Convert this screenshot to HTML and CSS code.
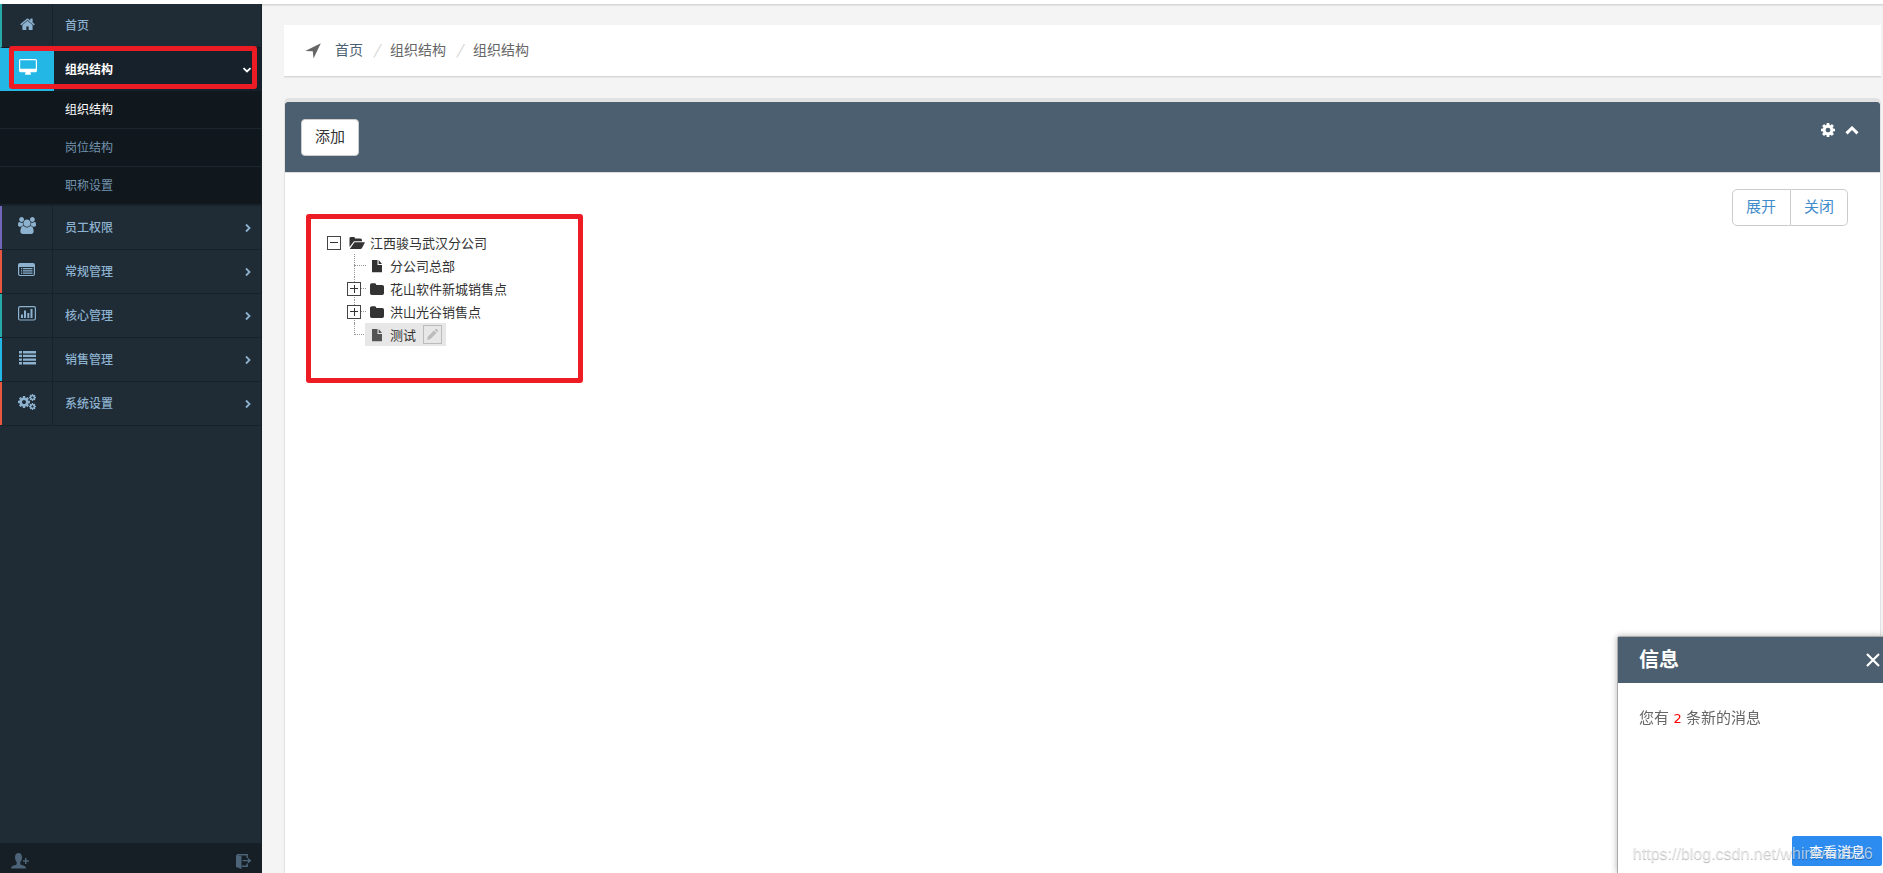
FILE: index.html
```html
<!DOCTYPE html>
<html lang="zh-CN">
<head>
<meta charset="utf-8">
<title>组织结构</title>
<link rel="stylesheet" href="styles.css">
</head>
<body>
<svg class="sprite" aria-hidden="true">
  <symbol id="cog" viewBox="128 128 1536 1536"><path d="M1152 896q0-106-75-181t-181-75-181 75-75 181 75 181 181 75 181-75 75-181zm512-109v222q0 12-8 23t-20 13l-185 28q-19 54-39 91 35 50 107 138 10 12 10 25t-9 23q-27 37-99 108t-94 71q-12 0-26-9l-138-108q-44 23-91 38-16 136-29 186-7 28-36 28h-222q-14 0-24.5-8.5t-11.5-21.5l-28-184q-49-16-90-37l-141 107q-10 9-25 9-14 0-25-11-126-114-165-168-7-10-7-23 0-12 8-23 15-21 51-66.5t54-70.5q-27-50-41-99l-183-27q-13-2-21-12.5t-8-23.5v-222q0-12 8-23t19-13l186-28q14-46 39-92-40-57-107-138-10-12-10-24 0-10 9-23 26-36 98.5-107.5t94.5-71.5q13 0 26 10l138 107q44-23 91-38 16-136 29-186 7-28 36-28h222q14 0 24.5 8.5t11.5 21.5l28 184q49 16 90 37l142-107q9-9 24-9 13 0 25 10 129 119 165 170 7 8 7 22 0 12-8 23-15 21-51 66.5t-54 70.5q26 50 41 98l183 28q13 2 21 12.5t8 23.5z"/></symbol>
  <symbol id="right" viewBox="0 0 8 10"><path d="M2 1.5 5.5 5 2 8.5" fill="none" stroke="currentColor" stroke-width="1.8"/></symbol>
  <symbol id="file" viewBox="0 0 12 14"><path d="M1 1h5.5v5H11v7.2H1z"/><path d="M7.6 1 11 4.9H7.6z"/></symbol>
  <symbol id="folder" viewBox="0 0 16 14"><path d="M1 3q0-1.800 1.800-1.800h3Q7.300 1.200 7.300 3h5.900Q15 3 15 4.800v6.400Q15 13 13.200 13H2.800Q1 13 1 11.200z"/></symbol>
</svg>
<div class="topbar"></div>
<div class="shell">
  <nav class="sidebar">
    <ul class="menu">
      <li class="item teal"><a href="#"><span class="ico"><svg width="15" height="14" viewBox="50 190 1692 1350"><path d="M1472 992v480q0 26-19 45t-45 19h-384v-384h-256v384h-384q-26 0-45-19t-19-45v-480q0-1 .5-3t.5-3l575-474 575 474q1 2 1 6zm223-69l-62 74q-8 9-21 11h-3q-13 0-21-7l-692-577-692 577q-12 8-24 7-13-2-21-11l-62-74q-8-10-7-23.500t11-21.500l719-599q32-26 76-26t76 26l244 204v-195q0-14 9-23t23-9h192q14 0 23 9t9 23v408l219 182q10 8 11 21.500t-7 23.500z"/></svg></span><span class="label">首页</span></a></li>
      <li class="item active"><a href="#"><span class="ico"><svg width="18" height="17" viewBox="-64 0 1920 1792"><path d="M1728 992v-832q0-13-9.500-22.500t-22.500-9.500h-1600q-13 0-22.500 9.500t-9.500 22.500v832q0 13 9.500 22.500t22.500 9.500h1600q13 0 22.500-9.500t9.500-22.500zm128-832v1088q0 66-47 113t-113 47h-544q0 37 16 77.500t32 71 16 43.500q0 26-19 45t-45 19h-512q-26 0-45-19t-19-45q0-14 16-44t32-70 16-78h-544q-66 0-113-47t-47-113v-1088q0-66 47-113t113-47h1600q66 0 113 47t47 113z"/></svg></span><span class="label">组织结构</span><svg class="arrow" width="10" height="8" viewBox="0 0 10 8"><path d="M1.500 2.200 5 5.500 8.500 2.200" fill="none" stroke="currentColor" stroke-width="1.800"/></svg></a><span class="mark"></span></li>
      <li class="sub">
        <ul>
          <li><a class="current" href="#">组织结构</a></li>
          <li><a href="#">岗位结构</a></li>
          <li><a href="#">职称设置</a></li>
        </ul>
      </li>
      <li class="item purple"><a href="#"><span class="ico"><svg width="18" height="17" viewBox="0 0 1920 1792"><path d="M593 896q-162 5-265 128h-134q-82 0-138-40.500t-56-118.500q0-353 124-353 6 0 43.500 21t97.500 42.500 119 21.500q67 0 133-23-5 37-5 66 0 139 81 256zm1071 637q0 120-73 189.500t-194 69.500h-874q-121 0-194-69.500t-73-189.500q0-53 3.500-103.500t14-109 26.500-108.500 43-97.500 62-81 85.500-53.500 111.500-20q10 0 43 21.500t73 48 107 48 135 21.500 135-21.500 107-48 73-48 43-21.500q61 0 111.500 20t85.500 53.500 62 81 43 97.500 26.500 108.500 14 109 3.500 103.500zm-1024-1277q0 106-75 181t-181 75-181-75-75-181 75-181 181-75 181 75 75 181zm704 384q0 159-112.500 271.500t-271.500 112.500-271.500-112.500-112.500-271.500 112.500-271.500 271.500-112.500 271.500 112.500 112.500 271.500zm576 225q0 78-56 118.500t-138 40.500h-134q-103-123-265-128 81-117 81-256 0-29-5-66 66 23 133 23 59 0 119-21.500t97.500-42.500 43.500-21q124 0 124 353zm-128-609q0 106-75 181t-181 75-181-75-75-181 75-181 181-75 181 75 75 181z"/></svg></span><span class="label">员工权限</span><svg class="arrow" width="8" height="10"><use href="#right"/></svg></a></li>
      <li class="item red"><a href="#"><span class="ico"><svg width="18" height="14" viewBox="0 0 18 14"><path fill-rule="evenodd" d="M2 0h13q2 0 2 2v9q0 2-2 2H2q-2 0-2-2V2q0-2 2-2zM1.200 4v7q0 1 1 1h12.600q1 0 1-1V4z"/><path d="M3 5h1.200v1.200H3zM5 5h9.500v1.200H5zM3 7.300h1.200v1.200H3zM5 7.300h9.500v1.200H5zM3 9.600h1.200v1.200H3zM5 9.600h9.500v1.200H5z"/></svg></span><span class="label">常规管理</span><svg class="arrow" width="8" height="10"><use href="#right"/></svg></a></li>
      <li class="item teal"><a href="#"><span class="ico"><svg width="18" height="15" viewBox="0 0 18 15"><rect x=".6" y=".6" width="16.800" height="13.400" rx="1.500" fill="none" stroke="currentColor" stroke-width="1.200"/><path d="M3 8.500h2V12H3zM6 4.500h2V12H6zM9.300 7h2v5h-2zM12.500 3h2v9h-2z"/></svg></span><span class="label">核心管理</span><svg class="arrow" width="8" height="10"><use href="#right"/></svg></a></li>
      <li class="item blue"><a href="#"><span class="ico"><svg width="17" height="14" viewBox="0 0 17 14"><path d="M0 0h3v2.400H0zM4 0h13v2.400H4zM0 3.700h3v2.400H0zM4 3.700h13v2.400H4zM0 7.400h3v2.400H0zM4 7.400h13v2.400H4zM0 11.100h3v2.400H0zM4 11.100h13v2.400H4z"/></svg></span><span class="label">销售管理</span><svg class="arrow" width="8" height="10"><use href="#right"/></svg></a></li>
      <li class="item red"><a href="#"><span class="ico"><svg width="18" height="16" viewBox="0 0 18 16"><use href="#cog" x="0" y="2" width="12" height="12"/><use href="#cog" x="11" y="0" width="7" height="7"/><use href="#cog" x="11" y="9" width="7" height="7"/></svg></span><span class="label">系统设置</span><svg class="arrow" width="8" height="10"><use href="#right"/></svg></a></li>
    </ul>
    <div class="foot">
      <button type="button" aria-label="添加用户"><svg width="18" height="16" viewBox="0 0 18 16"><path d="M7.500 0Q11 0 11 4.500 11 8 9.300 9.300v1.900Q10 12 12.500 12.600q2.500.700 2.500 3H0q0-2.300 2.500-3 2.500-.600 3.200-1.400V9.300Q4 8 4 4.500 4 0 7.500 0z"/><path d="M14 5h1.500v2.200H18v1.500h-2.500V11H14V8.700h-2V7.200h2z"/></svg></button>
      <button type="button" aria-label="退出"><svg width="16" height="15" viewBox="0 0 16 15"><path d="M0 1l5.500 1v13L0 13z"/><path d="M1 .8h10.200V4M6 12.300h5.200V9.500" fill="none" stroke="currentColor" stroke-width="1.400"/><path d="M6.500 6h5.300V3.800L15.500 6.700 11.800 9.600V7.300H6.500z"/></svg></button>
    </div>
  </nav>
  <main class="main">
    <div class="crumbs">
      <svg width="16" height="16" viewBox="0 0 16 16"><path d="M15.800.3 8.500 15.600 7.800 8.300.2 8z"/></svg>
      <a class="first" href="#">首页</a><i>/</i><a href="#">组织结构</a><i>/</i><span>组织结构</span>
    </div>
    <section class="panel">
      <header class="panel-head">
        <button class="btn add" type="button">添加</button>
        <div class="tools">
          <button type="button" aria-label="设置"><svg width="14" height="14"><use href="#cog"/></svg></button>
          <button type="button" aria-label="收起"><svg width="14" height="9" viewBox="0 0 14 9"><path d="M1.500 7.300 7 2l5.500 5.300" fill="none" stroke="currentColor" stroke-width="3"/></svg></button>
        </div>
      </header>
      <div class="panel-body">
        <div class="tree-box">
          <div class="node"><button class="toggle" type="button" aria-label="折叠"></button><svg width="16" height="14" viewBox="0 0 16 14"><path d="M.5 2.300Q.5 1 1.800 1h3Q6.200 1 6.200 2.500h5.300q1.500 0 1.500 1.800v.9H5L.5 11z"/><path d="M5.500 6.300H16L13 12q-.5 1-1.800 1H.8z"/></svg><span>江西骏马武汉分公司</span></div>
          <ul class="tree">
            <li class="leaf"><div class="node"><svg width="16" height="14"><use href="#file"/></svg><span>分公司总部</span></div></li>
            <li><div class="node"><button class="toggle plus" type="button" aria-label="展开"></button><svg width="16" height="14"><use href="#folder"/></svg><span>花山软件新城销售点</span></div></li>
            <li><div class="node"><button class="toggle plus" type="button" aria-label="展开"></button><svg width="16" height="14"><use href="#folder"/></svg><span>洪山光谷销售点</span></div></li>
            <li class="leaf"><div class="node selected"><svg width="16" height="14"><use href="#file"/></svg><span>测试</span><button class="edit" type="button" aria-label="编辑"><svg width="13" height="13" viewBox="0 0 13 13"><path d="M1 12l1-3.500L8 2.500 10.500 5l-6 6zM8.700 1.800 9.500 1q.7-.5 1.500.3l.8.8q.700.700 0 1.500l-.700.700z"/></svg></button></div></li>
          </ul>
        </div>
        <div class="group"><button class="btn" type="button">展开</button><button class="btn" type="button">关闭</button></div>
      </div>
    </section>
  </main>
</div>
<aside class="popup">
  <header><h2>信息</h2><button type="button" aria-label="关闭"><svg width="14" height="14" viewBox="0 0 14 14"><path d="M1 1l12 12M13 1 1 13" stroke="currentColor" stroke-width="2.200"/></svg></button></header>
  <p>您有 <b>2</b> 条新的消息</p>
  <button class="view" type="button">查看消息</button>
</aside>
<div class="watermark">https://blog.csdn.net/whirlwind526</div>
</body>
</html>
```
FILE: styles.css
```css
* { box-sizing: border-box; }
body {
  margin: 0;
  height: 100vh;
  overflow: hidden;
  display: flex;
  flex-direction: column;
  background: #fff;
  color: #555;
  font: 15px/20px "Noto Sans CJK SC", sans-serif;
}
ul { list-style: none; margin: 0; padding: 0; }
a { color: inherit; text-decoration: none; }
button { font: inherit; color: inherit; background: none; border: 0; padding: 0; display: block; }
svg { fill: currentColor; display: block; flex: none; }
.sprite { position: absolute; width: 0; height: 0; }

.topbar { height: 4px; flex: none; }
.shell { flex: 1; display: flex; min-height: 0; }

.sidebar {
  width: 262px;
  flex: none;
  display: flex;
  flex-direction: column;
  background: #1f2b35;
  border-right: 1px solid #172229;
  color: #8db2cf;
  font-size: 12px;
}
.menu { flex: 1; }
.item { position: relative; border-bottom: 1px solid #16212a; }
.item > a { display: flex; height: 43px; align-items: stretch; border-left: 2px solid transparent; }
.item.teal > a { border-color: #27a9a9; }
.item.purple > a { border-color: #7266ba; }
.item.red > a { border-color: #e9573f; }
.item.blue > a { border-color: #23b7e5; }
.ico { width: 51px; display: flex; align-items: center; justify-content: center; padding-bottom: 4px; border-right: 1px solid #17222b; }
.label { flex: 1; align-self: center; padding: 0 0 2px 12px; font-weight: 500; }
.arrow { align-self: center; margin-right: 9px; }
.item.active { margin-top: -1px; color: #fff; background: #17212b; border-bottom: 0; }
.item.active > a { height: 44px; border-top: 1px solid #111a21; border-left-color: #23b7e5; }
.active .ico { background: #23b7e5; width: 52px; border-color: #23b7e5; }
.active .label { padding-left: 11px; font-weight: 700; }
.mark {
  position: absolute;
  inset: -1px 4px 2px 9px;
  border: 5px solid #ed1c24;
  border-radius: 3px;
  pointer-events: none;
}
.sub { background: #10181e; border-bottom: 2px solid #17222a; }
.sub a { display: block; padding: 8px 0 9px 65px; color: #7393ad; }
.sub li + li { border-top: 1px solid #1b262e; }
.sub a.current { color: #fff; }
.foot {
  height: 30px;
  background: #151f25;
  color: #4d6478;
  display: flex;
  align-items: flex-end;
  justify-content: space-between;
  padding: 0 9px 4px 11px;
}

.main {
  flex: 1;
  min-width: 0;
  display: flex;
  flex-direction: column;
  background: #f4f4f4;
  border-top: 1px solid #d5d8d8;
  box-shadow: inset 0 1px 1px #e2e2e2;
  padding: 20px 2px 0 22px;
}
.crumbs {
  height: 52px;
  flex: none;
  display: flex;
  align-items: center;
  padding-left: 21px;
  background: #fff;
  border-bottom: 1px solid #d5d8d8;
  box-shadow: 0 1px 1px #e8e8e8;
  font-size: 14px;
  color: #666;
}
.crumbs svg { margin-right: 14px; }
.crumbs a, .crumbs span, .crumbs i { padding-bottom: 3px; }
.crumbs .first { color: #4c5f70; }
.crumbs i { width: 27px; text-align: center; color: #ccc; }
.panel {
  flex: 1;
  display: flex;
  flex-direction: column;
  margin-top: 21px;
  background: #fff;
  border: 1px solid #e2e2e2;
  border-width: 4px 1px 0;
  border-radius: 5px 5px 0 0;
}
.panel-head {
  height: 71px;
  flex: none;
  display: flex;
  align-items: flex-start;
  justify-content: space-between;
  padding: 17px 21px 0 16px;
  background: #4c5f70;
  border-bottom: 1px solid #ddd;
  border-radius: 3px 3px 0 0;
}
.btn { height: 37px; padding: 0 13px 3px; background: #fff; border: 1px solid #ccc; color: #428bca; }
.add { color: #333; border-radius: 4px; }
.tools { display: flex; align-items: center; gap: 10px; padding-top: 4px; color: #fff; }
.panel-body { display: flex; align-items: flex-start; justify-content: space-between; padding: 16px 32px 0 21px; }
.group { display: flex; }
.group .btn:first-child { padding-right: 14px; border-radius: 5px 0 0 5px; }
.group .btn:last-child { border-radius: 0 5px 5px 0; border-left: 0; }

.tree-box {
  width: 277px;
  margin-top: 25px;
  padding: 12px 16px 32px;
  border: 5px solid #ed1c24;
  border-radius: 3px;
  color: #333;
  font-size: 13px;
}
.node { display: flex; align-items: center; height: 23px; position: relative; width: max-content; }
.node span { padding-left: 5px; }
.toggle {
  width: 14px;
  height: 14px;
  margin-right: 8px;
  border: 1px solid #444;
  background: linear-gradient(#333, #333) center / 8px 1px no-repeat #fff;
}
.toggle.plus {
  background: linear-gradient(#333, #333) center / 8px 1px no-repeat, linear-gradient(#333, #333) center / 1px 8px no-repeat #fff;
}
.tree { padding-left: 20px; }
.tree li { position: relative; }
.tree li::before { content: ""; position: absolute; left: 7px; top: 0; height: 23px; border-left: 1px dotted #999; }
.tree li::after { content: ""; position: absolute; left: 7px; top: 11px; width: 12px; border-top: 1px dotted #999; }
.tree li:last-child::before { height: 12px; }
.tree .node { z-index: 1; }
.leaf .node { margin-left: 18px; padding: 0 4px; }
.selected { background: #e7e7e7; }
.selected > svg { color: #555; }
.edit { width: 19px; height: 19px; margin-left: 7px; border: 1px solid #bbb; color: #bbb; display: grid; place-items: center; }

.popup {
  position: fixed;
  right: 0;
  bottom: 0;
  width: 266px;
  height: 237px;
  background: #fff;
  border: 1px solid #aaa;
  border-width: 1px 0 0 1px;
  border-radius: 3px 0 0 0;
  box-shadow: 0 0 6px rgba(0, 0, 0, .3);
}
.popup header {
  height: 46px;
  display: flex;
  align-items: center;
  justify-content: space-between;
  padding: 0 3px 0 21px;
  background: #4c5f70;
  color: #fff;
}
.popup h2 { margin: 0; padding-bottom: 2px; font-size: 20px; line-height: 24px; }
.popup p { margin: 24px 21px; color: #666; }
.popup b { margin: 0 1px; color: #f00; font: 13px "DejaVu Sans", sans-serif; }
.view {
  position: absolute;
  right: 1px;
  bottom: 7px;
  height: 30px;
  padding: 0 17px;
  background: #2d8cf0;
  color: #fff;
  font-size: 14px;
  border-radius: 2px;
}
.watermark {
  position: fixed;
  right: 10px;
  bottom: 9px;
  font: 16px/20px "Liberation Sans", Arial, sans-serif;
  color: rgba(255, 255, 255, .6);
  text-shadow: 0 1px 1px rgba(0, 0, 0, .3);
  pointer-events: none;
}
```
